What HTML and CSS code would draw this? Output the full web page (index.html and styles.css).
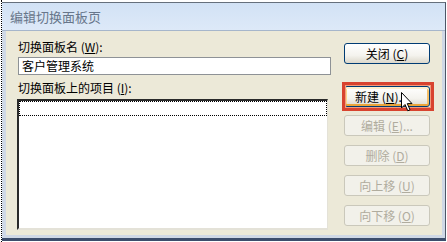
FILE: index.html
```html
<!DOCTYPE html>
<html>
    <head>
        <title> 编辑切换面板页 </title>
        <link rel="stylesheet" href="styles.css">
    </head>
    <body>
        <div class = "screen">
            <div class = "window">
                <div class = "titlebar"> 编辑切换面板页 </div>
                <div class = "content">
                    <div class = "left-col">
                        <div class = "label">切换面板名 (<u>W</u>):</div>
                        <div class = "textbox">客户管理系统</div>
                        <div class = "label label-list">切换面板上的项目 (<u>I</u>):</div>
                        <div class = "listbox">
                            <div class = "focus-row"></div>
                        </div>
                    </div>
                    <div class = "btn-col">
                        <button class = "btn btn-close">关闭 (<u>C</u>)</button>
                        <div class = "hot-wrap">
                            <button class = "btn btn-hot">新建 (<u>N</u>)...</button>
                            <div class = "red-frame"></div>
                            <svg class = "cursor" width="12" height="20" viewBox="0 0 12 20">
                                <polygon points="0.5,0.5 0.5,16 4,12.5 6.8,18.8 9,17.8 6.3,11.6 11,11.6" fill="#fff" stroke="#000" stroke-width="1"/>
                            </svg>
                        </div>
                        <button class = "btn" disabled>编辑 (<u>E</u>)...</button>
                        <button class = "btn" disabled>删除 (<u>D</u>)</button>
                        <button class = "btn" disabled>向上移 (<u>U</u>)</button>
                        <button class = "btn" disabled>向下移 (<u>O</u>)</button>
                    </div>
                </div>
            </div>
        </div>
    </body>
</html>
```

FILE: styles.css
```css
body {
    margin: 0;
    background-color: #ffffff;
    font-family: "Noto Sans CJK SC", "Liberation Sans", sans-serif;
    font-size: 12px;
}

.screen {
    margin-left: 1px;
    padding-top: 2px;
    border-left: 1px dotted #000;
    width: 444px;
    height: 240px;
}

.window {
    box-sizing: border-box;
    width: 444px;
    height: 239px;
    display: flex;
    flex-direction: column;
    border-top: 1px solid #66707c;
    border-right: 1px solid #4c5768;
    border-bottom: 3px solid #3c4d6c;
    background-color: #cfd8e6;
}

.titlebar {
    height: 27px;
    line-height: 27px;
    padding-left: 8px;
    font-size: 13px;
    color: #67768a;
    background: linear-gradient(#d2e2f5, #dde9f8);
    border-bottom: 1px solid #a6b6cb;
}

.content {
    flex: 1;
    display: flex;
    margin: 0 3px 3px 4px;
    background-color: #ece9d8;
}

.left-col {
    width: 314px;
    margin-left: 11px;
    padding-top: 8px;
}

.label {
    height: 16px;
    line-height: 16px;
    padding-left: 1px;
    color: #000;
}

.label-list {
    margin-top: 5px;
}

.textbox {
    box-sizing: border-box;
    margin-top: 2px;
    margin-left: 1px;
    width: 313px;
    height: 18px;
    line-height: 16px;
    padding-left: 3px;
    border: 1px solid #8e9296;
    background-color: #fff;
    font-size: 12px;
}

.listbox {
    box-sizing: border-box;
    margin-top: 3px;
    width: 311px;
    height: 131px;
    background-color: #fff;
    border-top: 2px solid #2a2a2a;
    border-left: 2px solid #2a2a2a;
    border-right: 1px solid #e4e2d8;
    border-bottom: 2px solid #e4e2d8;
}

.focus-row {
    height: 13px;
    border: 1px dotted #000;
}

.btn-col {
    width: 86px;
    margin-left: 13px;
    padding-top: 12px;
    display: flex;
    flex-direction: column;
    gap: 9px;
}

.btn {
    box-sizing: border-box;
    width: 86px;
    height: 21px;
    padding: 0;
    font-family: "Noto Sans CJK SC", "Liberation Sans", sans-serif;
    font-size: 12px;
    color: #000;
    border: 1px solid #003c74;
    border-radius: 3px;
    background: linear-gradient(#ffffff, #f4f3ee 60%, #dcd8cb);
}

.btn-close {
    margin-bottom: 13px;
}

.btn:disabled {
    color: #b0ac9e;
    border-color: #cac8bb;
    background: #f2f1ea;
}

.hot-wrap {
    position: relative;
    height: 21px;
    margin-bottom: -1px;
}

.btn-hot {
    box-shadow: inset 0 2px 0 #fff0cf, inset 0 -2px 0 #eba53a, inset 2px 0 0 #fbd68c, inset -2px 0 0 #f4c06a;
    text-align: left;
    padding-left: 10px;
}

.red-frame {
    position: absolute;
    top: -4px;
    left: -2px;
    right: -4px;
    bottom: -4px;
    border: 3px solid #d8432f;
    box-shadow: inset 0 0 0 1px #f19a7c;
}

.cursor {
    position: absolute;
    left: 57px;
    top: 6px;
}
```
